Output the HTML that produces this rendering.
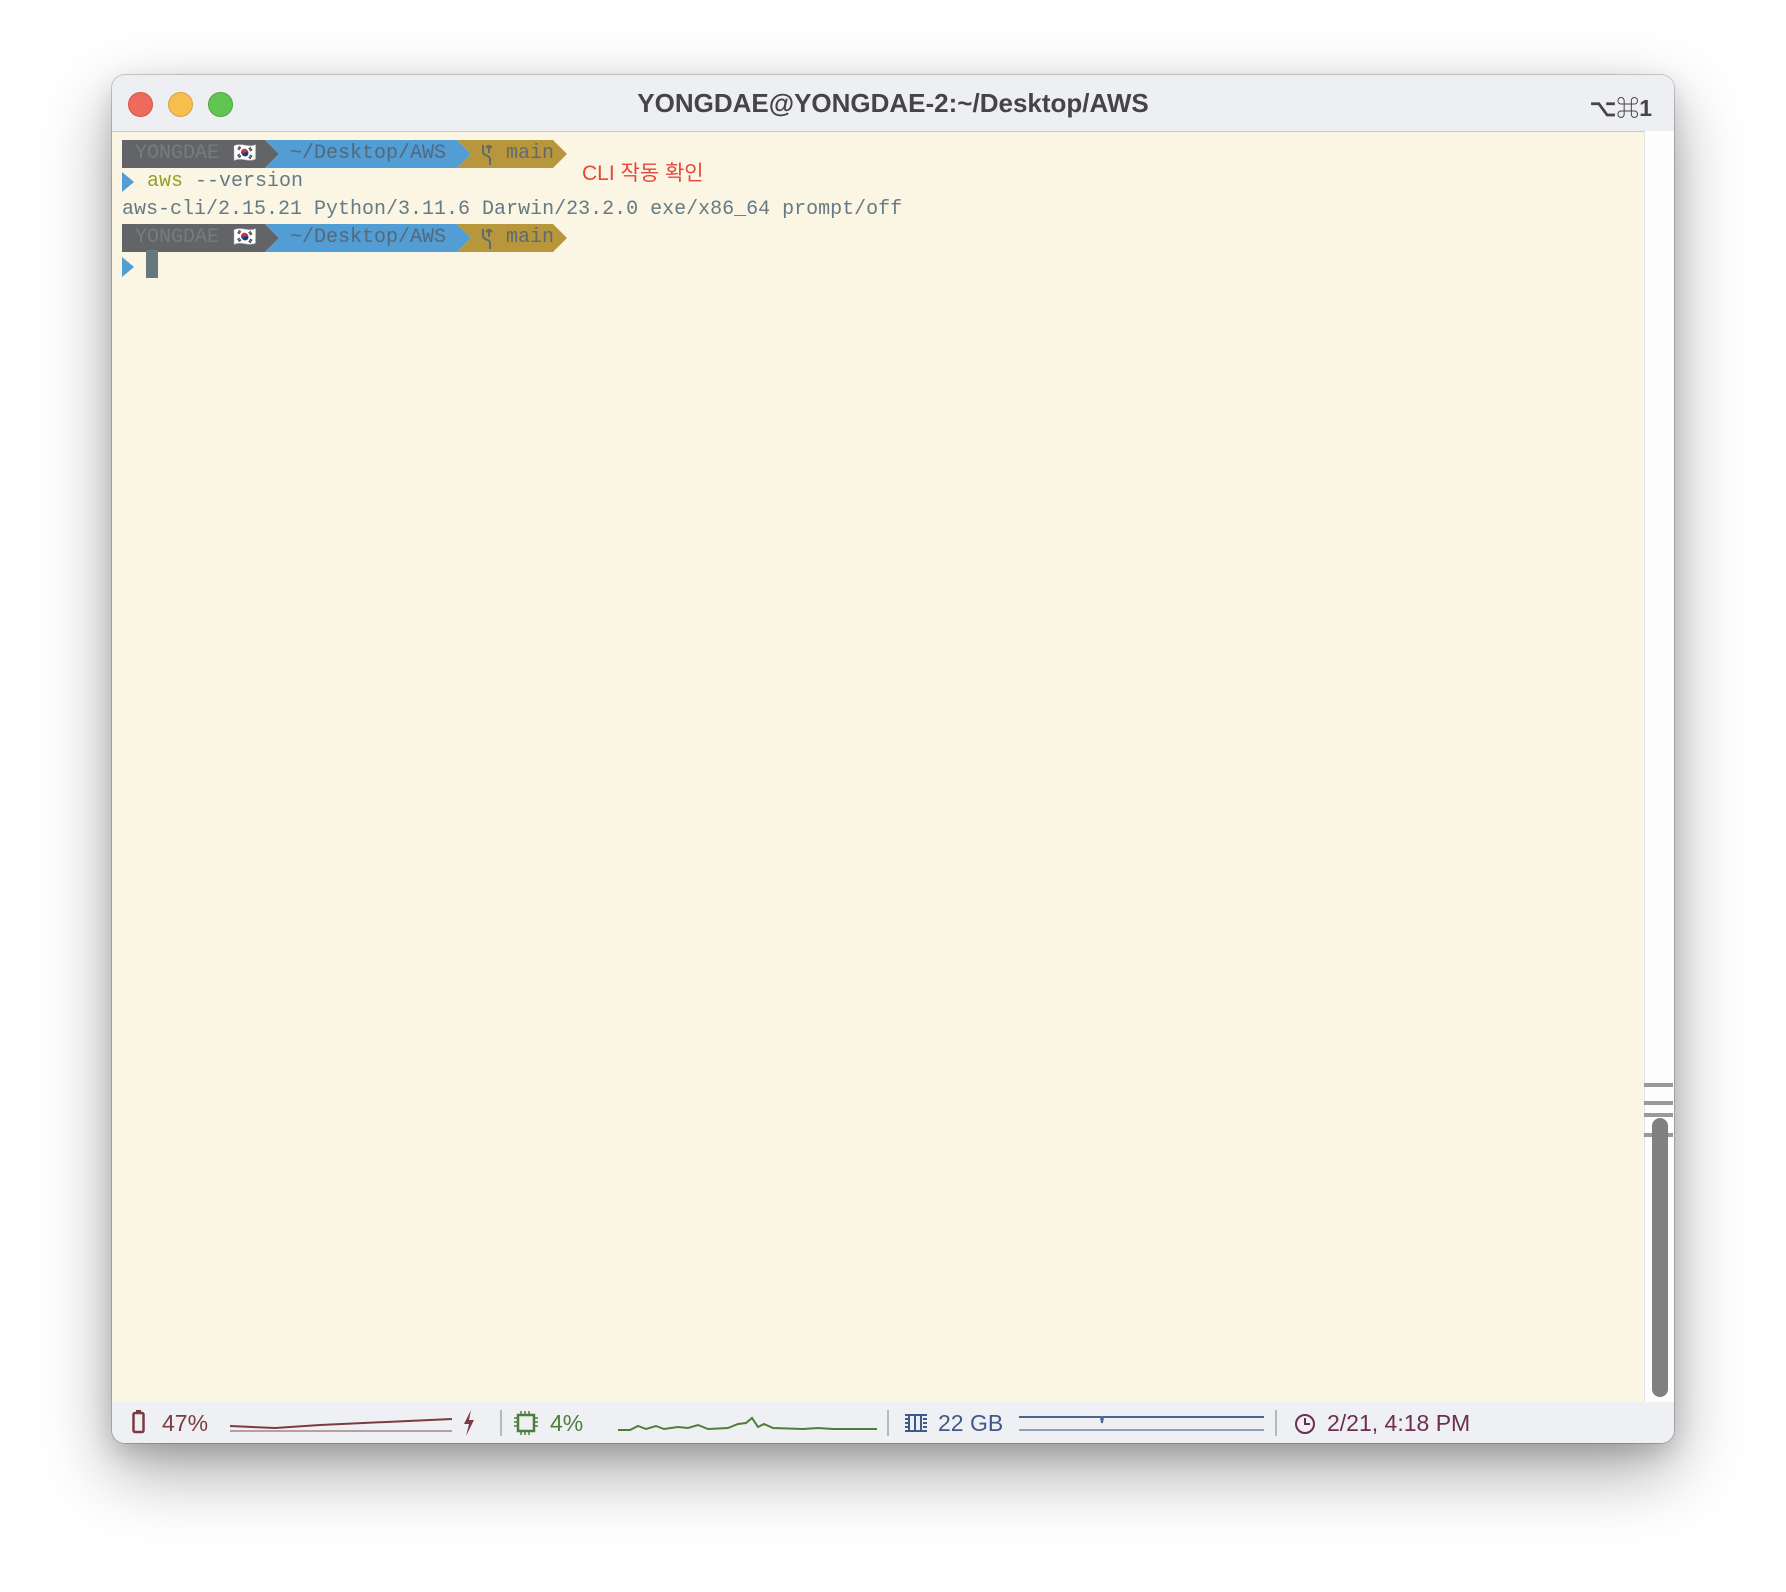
<!DOCTYPE html>
<html><head><meta charset="utf-8"><style>
html,body{margin:0;padding:0;}
body{width:1786px;height:1592px;background:#fff;position:relative;overflow:hidden;font-family:"Liberation Sans","Noto Sans CJK KR",sans-serif;}
.win{position:absolute;left:112px;top:75px;width:1562px;height:1368px;border-radius:13px;background:#fbf5e4;overflow:hidden;box-shadow:0 0 0 1px rgba(0,0,0,0.18),0 28px 70px rgba(0,0,0,0.35),0 10px 25px rgba(0,0,0,0.15);}
.title{position:absolute;left:0;top:0;width:100%;height:56px;background:#eeeff3;border-bottom:1px solid #c9c9cc;}
.dot{position:absolute;top:17px;width:24px;height:24px;border-radius:50%;}
.ttl{position:absolute;left:0;width:100%;top:13px;text-align:center;font-weight:bold;font-size:26px;color:#454545;}
.key{position:absolute;right:22px;top:14px;font-weight:bold;font-size:23px;color:#454545;}
.mono{font-family:"Liberation Mono","DejaVu Sans Mono",monospace;font-size:20px;}
.row{position:absolute;left:10px;height:28px;line-height:28px;white-space:pre;color:#657b83;}
.seg{position:absolute;height:27px;line-height:27px;white-space:pre;}
.sb{position:absolute;left:0;top:1327px;width:100%;height:41px;background:#eff0f4;font-size:23px;}
.sb span{position:absolute;top:8px;}
.sep{position:absolute;top:8px;width:2px;height:26px;background:#b8b8bc;}
</style></head><body>
<div class="win">
 <div class="title">
  <div class="dot" style="left:16px;background:#ee6a5e;border:1px solid #d55548;width:23px;height:23px"></div>
  <div class="dot" style="left:56px;background:#f5be4f;border:1px solid #d9a23e;width:23px;height:23px"></div>
  <div class="dot" style="left:96px;background:#61c554;border:1px solid #4ea743;width:23px;height:23px"></div>
  <div class="ttl">YONGDAE@YONGDAE-2:~/Desktop/AWS</div>
  <div class="key">⌥⌘1</div>
 </div>
 <!-- prompt 1 -->
 <svg style="position:absolute;left:10px;top:65px" width="446" height="28">
  <polygon points="0,0 143,0 157,14 143,28 0,28" fill="#636467"/>
  <polygon points="143,0 335,0 349,14 335,28 143,28 157,14" fill="#529dd4"/>
  <polygon points="335,0 431,0 445,14 431,28 335,28 349,14" fill="#b8963b"/>
 </svg>
 <div class="seg mono" style="left:23px;top:65px;color:#737d80">YONGDAE</div>
 <div class="seg" style="left:121px;top:65px;font-size:19px">🇰🇷</div>
 <div class="seg mono" style="left:178px;top:65px;color:#56677a">~/Desktop/AWS</div>
 <svg style="position:absolute;left:368px;top:70px" width="14" height="20"><path d="M3,0v7M3,7 C3,11 10,10 10,14 V20 M9,0 v8 M6,3 l3,-3 l3,3" stroke="#5f6a70" stroke-width="2" fill="none"/></svg>
 <div class="seg mono" style="left:394px;top:65px;color:#5f6a70">main</div>
 <div style="position:absolute;left:470px;top:82px;font-size:21px;color:#e9463b;font-family:'Liberation Sans','Noto Sans CJK KR',sans-serif">CLI 작동 확인</div>
 <svg style="position:absolute;left:10px;top:97px" width="14" height="20"><polygon points="0,0 12,10 0,20" fill="#529dd4"/></svg>
 <div class="row mono" style="top:93px;left:35px"><span style="color:#8ea32a">aws</span> --version</div>
 <div class="row mono" style="top:121px">aws-cli/2.15.21 Python/3.11.6 Darwin/23.2.0 exe/x86_64 prompt/off</div>
 <!-- prompt 2 -->
 <svg style="position:absolute;left:10px;top:149px" width="446" height="28">
  <polygon points="0,0 143,0 157,14 143,28 0,28" fill="#636467"/>
  <polygon points="143,0 335,0 349,14 335,28 143,28 157,14" fill="#529dd4"/>
  <polygon points="335,0 431,0 445,14 431,28 335,28 349,14" fill="#b8963b"/>
 </svg>
 <div class="seg mono" style="left:23px;top:149px;color:#737d80">YONGDAE</div>
 <div class="seg" style="left:121px;top:149px;font-size:19px">🇰🇷</div>
 <div class="seg mono" style="left:178px;top:149px;color:#56677a">~/Desktop/AWS</div>
 <svg style="position:absolute;left:368px;top:154px" width="14" height="20"><path d="M3,0v7M3,7 C3,11 10,10 10,14 V20 M9,0 v8 M6,3 l3,-3 l3,3" stroke="#5f6a70" stroke-width="2" fill="none"/></svg>
 <div class="seg mono" style="left:394px;top:149px;color:#5f6a70">main</div>
 <svg style="position:absolute;left:10px;top:182px" width="14" height="20"><polygon points="0,0 12,10 0,20" fill="#529dd4"/></svg>
 <div style="position:absolute;left:34px;top:175px;width:12px;height:28px;background:#67787f"></div>
 <!-- scrollbar -->
 <div style="position:absolute;left:1532px;top:56px;width:30px;height:1271px;background:#fdfdfd;border-left:1px solid #e4e4e4"></div>
 <div style="position:absolute;left:1532px;top:1008px;width:29px;height:4px;background:#9a9a9a"></div>
 <div style="position:absolute;left:1532px;top:1026px;width:29px;height:4px;background:#9a9a9a"></div>
 <div style="position:absolute;left:1532px;top:1038px;width:29px;height:4px;background:#9a9a9a"></div>
 <div style="position:absolute;left:1532px;top:1058px;width:29px;height:4px;background:#9a9a9a"></div>
 <div style="position:absolute;left:1540px;top:1043px;width:16px;height:279px;border-radius:8px;background:#808080"></div>
 <!-- status bar -->
 <div class="sb">
  <svg style="position:absolute;left:20px;top:8px" width="14" height="24"><rect x="4" y="0" width="5" height="3" fill="#7b3b42"/><rect x="1.5" y="3" width="10" height="19" rx="1.5" fill="none" stroke="#7b3b42" stroke-width="2.5"/></svg>
  <span style="left:50px;color:#7b3b42">47%</span>
  <svg style="position:absolute;left:118px;top:12px" width="225" height="20"><path d="M0,12 L45,14 L90,11 L222,5" stroke="#7b3b42" stroke-width="2" fill="none"/><line x1="0" y1="17" x2="222" y2="17" stroke="#b99ea1" stroke-width="2"/></svg>
  <svg style="position:absolute;left:350px;top:8px" width="14" height="26"><polygon points="9,0 2,14 7,14 4,26 12,10 7,10" fill="#7b3b42"/></svg>
  <div class="sep" style="left:388px"></div>
  <svg style="position:absolute;left:402px;top:9px" width="24" height="24"><rect x="4" y="4" width="16" height="16" fill="none" stroke="#4f7d3b" stroke-width="2.5"/><path d="M7,0v4M11,0v4M15,0v4M7,20v4M11,20v4M15,20v4M0,7h4M0,11h4M0,15h4M20,7h4M20,11h4M20,15h4" stroke="#4f7d3b" stroke-width="1.5"/></svg>
  <span style="left:438px;color:#4f7d3b">4%</span>
  <svg style="position:absolute;left:506px;top:12px" width="262" height="20"><path d="M0,16 L12,16 L20,12 L28,15 L38,12 L46,15 L60,13 L70,14 L80,11 L90,15 L110,14 L120,10 L128,9 L134,4 L140,13 L146,10 L155,14 L185,15 L200,14 L215,15 L259,15" stroke="#4f7d3b" stroke-width="2" fill="none"/></svg>
  <div class="sep" style="left:775px"></div>
  <svg style="position:absolute;left:792px;top:11px" width="24" height="20"><path d="M1,2h22M1,18h22M5,2v16M11,2v16M17,2v16M1,6h4M1,10h4M1,14h4M19,6h4M19,10h4M19,14h4" stroke="#3d5a8a" stroke-width="2" fill="none"/></svg>
  <span style="left:826px;color:#3d5a8a">22 GB</span>
  <svg style="position:absolute;left:907px;top:12px" width="248" height="20"><path d="M0,3 L82,3 L83,9 L84,3 L245,3" stroke="#4d6690" stroke-width="2" fill="none"/><line x1="0" y1="16" x2="245" y2="16" stroke="#8fa0ba" stroke-width="2"/></svg>
  <div class="sep" style="left:1163px"></div>
  <svg style="position:absolute;left:1182px;top:11px" width="22" height="22"><circle cx="11" cy="11" r="9" fill="none" stroke="#6e2e4f" stroke-width="2"/><path d="M11,5v6h5" stroke="#6e2e4f" stroke-width="2" fill="none"/></svg>
  <span style="left:1215px;color:#6e2e4f">2/21, 4:18 PM</span>
 </div>
</div>
</body></html>
